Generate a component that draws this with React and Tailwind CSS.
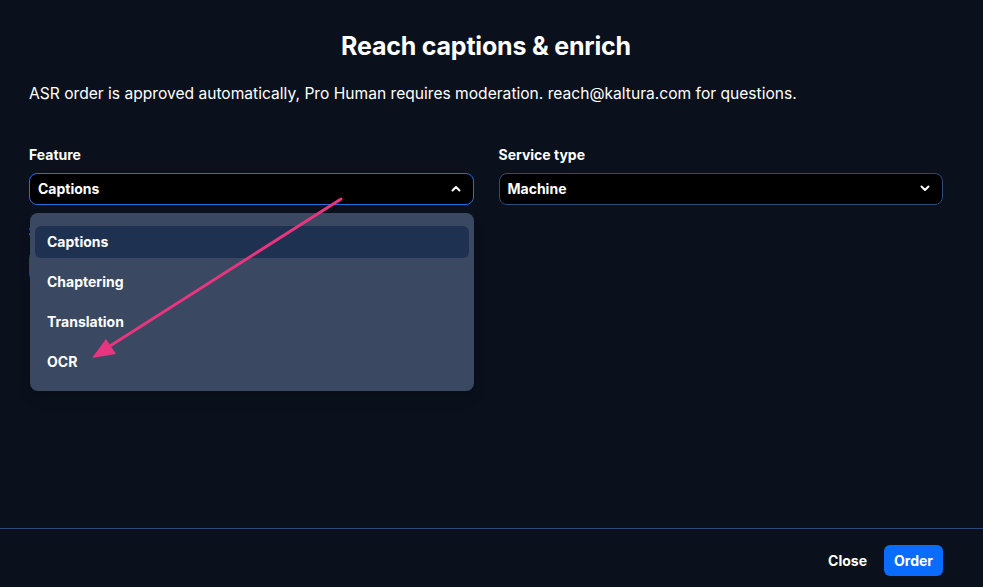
import React from "react";

function Chevron({ up }) {
  return (
    <svg width="10" height="7" viewBox="0 0 10 7" className="shrink-0">
      <path
        d={up ? "M1.5 5.5 L5 2 L8.5 5.5" : "M1.5 1.5 L5 5 L8.5 1.5"}
        fill="none"
        stroke="white"
        strokeWidth="2"
        strokeLinecap="round"
        strokeLinejoin="round"
      />
    </svg>
  );
}

export default function App() {
  const items = ["Captions", "Chaptering", "Translation", "OCR"];
  return (
    <div
      className="w-[983px] h-[587px] bg-[#0b111c] text-white flex flex-col relative overflow-hidden"
      style={{ fontFamily: "Inter, 'Noto Sans', sans-serif" }}
    >
      <div className="flex-1 pl-[29px] pr-[40px]">
        <h1 className="text-center font-bold text-[25px] leading-none pt-[34px] tracking-[-0.2px]">
          Reach captions &amp; enrich
        </h1>
        <p className="mt-[27px] text-[15.6px] leading-none">
          ASR order is approved automatically, Pro Human requires moderation. reach@kaltura.com for questions.
        </p>
        <div className="mt-[46px] grid grid-cols-2 gap-[25px]">
          <div className="relative">
            <div className="text-[14px] font-bold leading-none mb-[11px]">Feature</div>
            <div className="h-[32px] rounded-[8px] border border-[#1f6fe6] bg-black flex items-center justify-between px-[8px] pr-[12px]">
              <span className="text-[14px] font-bold">Captions</span>
              <Chevron up />
            </div>
            <div className="mt-[20px] text-[14px] font-bold leading-none mb-[11px]">Source language</div>
            <div className="h-[32px] rounded-[8px] border border-[#2a4a7a] bg-black" />
            <div className="absolute left-[1px] right-0 top-[65px] rounded-[8px] bg-[#3a4861] px-[5px] py-[13px] flex flex-col gap-[8px] shadow-lg">
              {items.map((it, i) => (
                <div
                  key={it}
                  className={
                    "h-[32px] rounded-[6px] flex items-center px-[12px] text-[14px] font-bold " +
                    (i === 0 ? "bg-[#1e3150]" : "")
                  }
                >
                  {it}
                </div>
              ))}
            </div>
          </div>
          <div>
            <div className="text-[14px] font-bold leading-none mb-[11px]">Service type</div>
            <div className="h-[32px] rounded-[8px] border border-[#2a4a7a] bg-black flex items-center justify-between px-[8px] pr-[12px]">
              <span className="text-[14px] font-bold">Machine</span>
              <Chevron />
            </div>
          </div>
        </div>
      </div>
      <div className="h-[59px] border-t border-[#2b4a7a] flex items-start pt-[16px] justify-end pr-[40px] gap-[17px]">
        <button className="h-[31px] text-[14px] font-bold text-white">Close</button>
        <button className="h-[31px] px-[10px] rounded-[6px] bg-[#0a6cff] text-[14px] font-bold text-white">
          Order
        </button>
      </div>
      <svg className="absolute left-0 top-0 pointer-events-none" width="983" height="587">
        <line x1="341" y1="199" x2="110" y2="346" stroke="#e8357f" strokeWidth="3" strokeLinecap="round" />
        <polygon points="92,358 106,339 116,354" fill="#e8357f" />
      </svg>
    </div>
  );
}
